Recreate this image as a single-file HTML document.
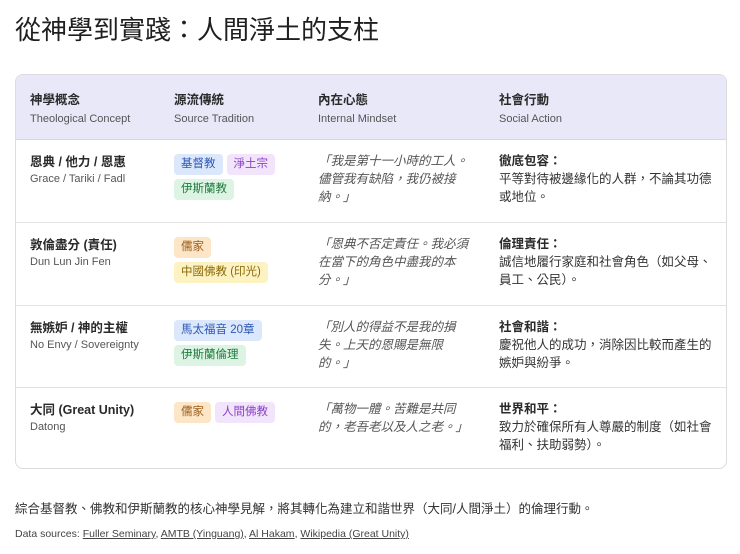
<!DOCTYPE html><html><head><meta charset="utf-8"><style>
*{margin:0;padding:0;box-sizing:border-box}
body{width:740px;height:554px;background:#fff;font-family:"Liberation Sans","Noto Sans CJK TC",sans-serif;color:#222;position:relative;overflow:hidden}
h1{position:absolute;left:15px;top:10px;font-size:26px;font-weight:400;color:#1f1f1f}
.card{position:absolute;left:15px;top:74px;width:712px;height:395px;border:1px solid #dcdce0;border-radius:8px;overflow:hidden}
.hd{position:absolute;left:0;top:0;width:100%;height:65px;background:#e8e8f8;border-bottom:1px solid #d6d6e0}
.row{position:absolute;left:0;width:100%;border-bottom:1px solid #e2e2e2}
.c{position:absolute;font-size:12px;line-height:18px}
.b{font-weight:700;font-size:12.5px;color:#2a2a2a}
.s{font-size:11px;color:#555;line-height:16px}
.q{font-style:italic;color:#555;font-size:12.5px;line-height:18px;width:152px}
.a{color:#333;font-size:12.5px;line-height:18px;width:216px}
.a b{color:#2a2a2a}
.t{display:inline-block;font-size:11.5px;line-height:21px;height:21px;padding:0 7px;border-radius:4px;margin:0 4px 4px 0}
.bl{background:#dbe7fb;color:#2c57b5}.pu{background:#f2e5fb;color:#8b3fc6}.gr{background:#ddf4e4;color:#207a3d}.or{background:#fde6c8;color:#985a16}.ye{background:#fdf2c2;color:#8a6a08}
.foot{position:absolute;left:15px;top:498px;font-size:12.5px;color:#333}
.src{position:absolute;left:15px;top:528px;font-size:10.5px;color:#444}
.src u{color:#444}
</style></head><body>
<h1>從神學到實踐：人間淨土的支柱</h1>
<div class="card">
<div class="hd">
<div class="c" style="left:14px;top:16px"><div class="b">神學概念</div><div class="s" style="margin-top:2px">Theological Concept</div></div>
<div class="c" style="left:158px;top:16px"><div class="b">源流傳統</div><div class="s" style="margin-top:2px">Source Tradition</div></div>
<div class="c" style="left:302px;top:16px"><div class="b">內在心態</div><div class="s" style="margin-top:2px">Internal Mindset</div></div>
<div class="c" style="left:483px;top:16px"><div class="b">社會行動</div><div class="s" style="margin-top:2px">Social Action</div></div>
</div>
<div class="row" style="top:65px;height:83px">
<div class="c" style="left:14px;top:13px"><div class="b">恩典 / 他力 / 恩惠</div><div class="s">Grace / Tariki / Fadl</div></div>
<div class="c" style="left:158px;top:14px;width:140px"><span class="t bl">基督教</span><span class="t pu">淨土宗</span><br><span class="t gr">伊斯蘭教</span></div>
<div class="c q" style="left:302px;top:12px">「我是第十一小時的工人。儘管我有缺陷，我仍被接納。」</div>
<div class="c a" style="left:483px;top:12px"><b>徹底包容：</b><br>平等對待被邊緣化的人群，不論其功德或地位。</div>
</div>
<div class="row" style="top:148px;height:83px">
<div class="c" style="left:14px;top:13px"><div class="b">敦倫盡分 (責任)</div><div class="s">Dun Lun Jin Fen</div></div>
<div class="c" style="left:158px;top:14px;width:140px"><span class="t or">儒家</span><br><span class="t ye">中國佛教 (印光)</span></div>
<div class="c q" style="left:302px;top:12px">「恩典不否定責任。我必須在當下的角色中盡我的本分。」</div>
<div class="c a" style="left:483px;top:12px"><b>倫理責任：</b><br>誠信地履行家庭和社會角色（如父母、員工、公民）。</div>
</div>
<div class="row" style="top:231px;height:82px">
<div class="c" style="left:14px;top:13px"><div class="b">無嫉妒 / 神的主權</div><div class="s">No Envy / Sovereignty</div></div>
<div class="c" style="left:158px;top:14px;width:140px"><span class="t bl">馬太福音 20章</span><br><span class="t gr">伊斯蘭倫理</span></div>
<div class="c q" style="left:302px;top:12px">「別人的得益不是我的損失。上天的恩賜是無限的。」</div>
<div class="c a" style="left:483px;top:12px"><b>社會和諧：</b><br>慶祝他人的成功，消除因比較而產生的嫉妒與紛爭。</div>
</div>
<div class="row" style="top:313px;height:82px;border-bottom:none">
<div class="c" style="left:14px;top:13px"><div class="b">大同 (Great Unity)</div><div class="s">Datong</div></div>
<div class="c" style="left:158px;top:14px;width:140px"><span class="t or">儒家</span><span class="t pu">人間佛教</span></div>
<div class="c q" style="left:302px;top:12px">「萬物一體。苦難是共同的，老吾老以及人之老。」</div>
<div class="c a" style="left:483px;top:12px"><b>世界和平：</b><br>致力於確保所有人尊嚴的制度（如社會福利、扶助弱勢）。</div>
</div>
</div>
<div class="foot">綜合基督教、佛教和伊斯蘭教的核心神學見解，將其轉化為建立和諧世界（大同/人間淨土）的倫理行動。</div>
<div class="src">Data sources: <u>Fuller Seminary</u>, <u>AMTB (Yinguang)</u>, <u>Al Hakam</u>, <u>Wikipedia (Great Unity)</u></div>
</body></html>
